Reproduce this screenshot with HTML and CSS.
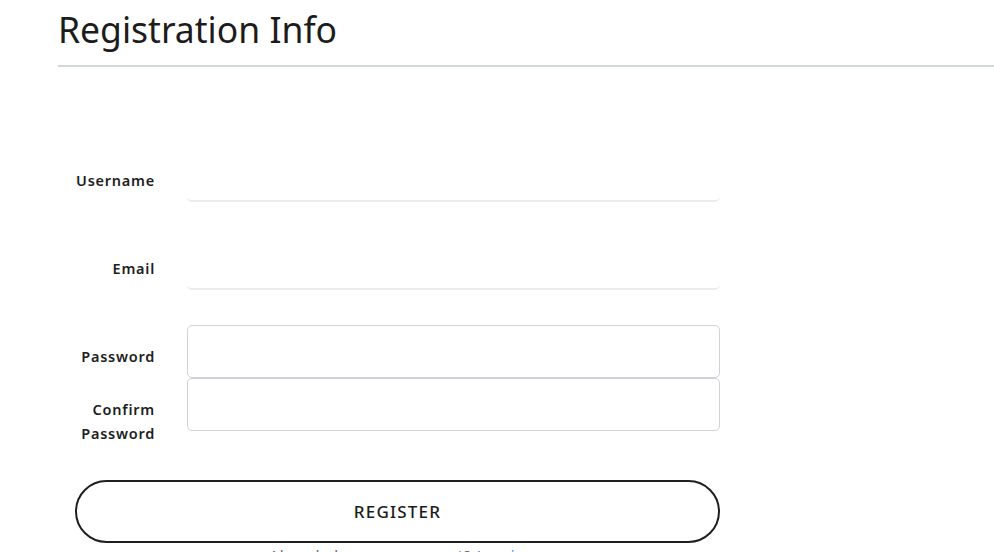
FILE: index.html
```html
<!DOCTYPE html>
<html lang="en">
<head>
<meta charset="utf-8">
<title>Registration Info</title>
<link rel="stylesheet" href="styles.css">
</head>
<body>
<main class="page">
  <header class="page-head">
    <h1 class="title">Registration Info</h1>
  </header>
  <form class="form">
    <div class="row row-a">
      <label class="label" for="u">Username</label>
      <input class="input input-flat" id="u" type="text">
    </div>
    <div class="row row-b">
      <label class="label" for="e">Email</label>
      <input class="input input-flat" id="e" type="email">
    </div>
    <div class="row">
      <label class="label" for="p">Password</label>
      <input class="input input-box" id="p" type="password">
    </div>
    <div class="row">
      <label class="label" for="c">Confirm Password</label>
      <input class="input input-box" id="c" type="password">
    </div>
    <button class="btn" type="button">REGISTER</button>
    <p class="foot">Already have an account? <a class="link" href="#">Log in</a></p>
  </form>
</main>
</body>
</html>
```
FILE: styles.css
```css
* { box-sizing: border-box; }
html, body { margin: 0; padding: 0; background: #fff; }
body {
  font-family: "Noto Sans", "Open Sans", sans-serif;
  color: #1c1c1c;
  overflow: hidden;
  height: 552px;
}
.page { padding-left: 58px; }
.page-head {
  border-bottom: 2px solid #d3d8db;
  height: 67px;
}
.title {
  margin: 0;
  padding-top: 5px;
  font-size: 35.5px;
  font-weight: 400;
  line-height: 48px;
  color: #1c1c1c;
}
.form {
  width: 662px;
  padding-top: 82px;
}
.row {
  display: grid;
  grid-template-columns: 97px 533px;
  grid-template-rows: 53px;
  column-gap: 32px;
}
.row-a { margin-bottom: 35px; }
.row-b { margin-bottom: 35px; }
.label {
  text-align: right;
  font-size: 14.5px;
  font-weight: 600;
  line-height: 24px;
  padding-top: 19px;
  color: #1e1e1e;
  letter-spacing: 0.75px;
}
.input {
  height: 53px;
  width: 533px;
  font: inherit;
  outline: none;
  background: #fff;
}
.input-flat {
  border: none;
  border-bottom: 2px solid #e9ecef;
  border-radius: 0 0 5px 5px;
}
.input-box {
  border: 1px solid #cfd3d8;
  border-radius: 5px;
}
.btn {
  display: block;
  margin: 49px 0 0 17px;
  width: 645px;
  height: 63px;
  border: 2px solid #1f1f1f;
  border-radius: 32px;
  background: #fff;
  font-family: inherit;
  font-size: 17px;
  font-weight: 500;
  color: #1c1c1c;
  letter-spacing: 1.2px;
}
.foot {
  margin: 2px 0 0 17px;
  width: 645px;
  text-align: center;
  font-size: 15px;
  color: #666;
  letter-spacing: 1px;
}
.link { color: #3b7ddd; text-decoration: none; }
```
